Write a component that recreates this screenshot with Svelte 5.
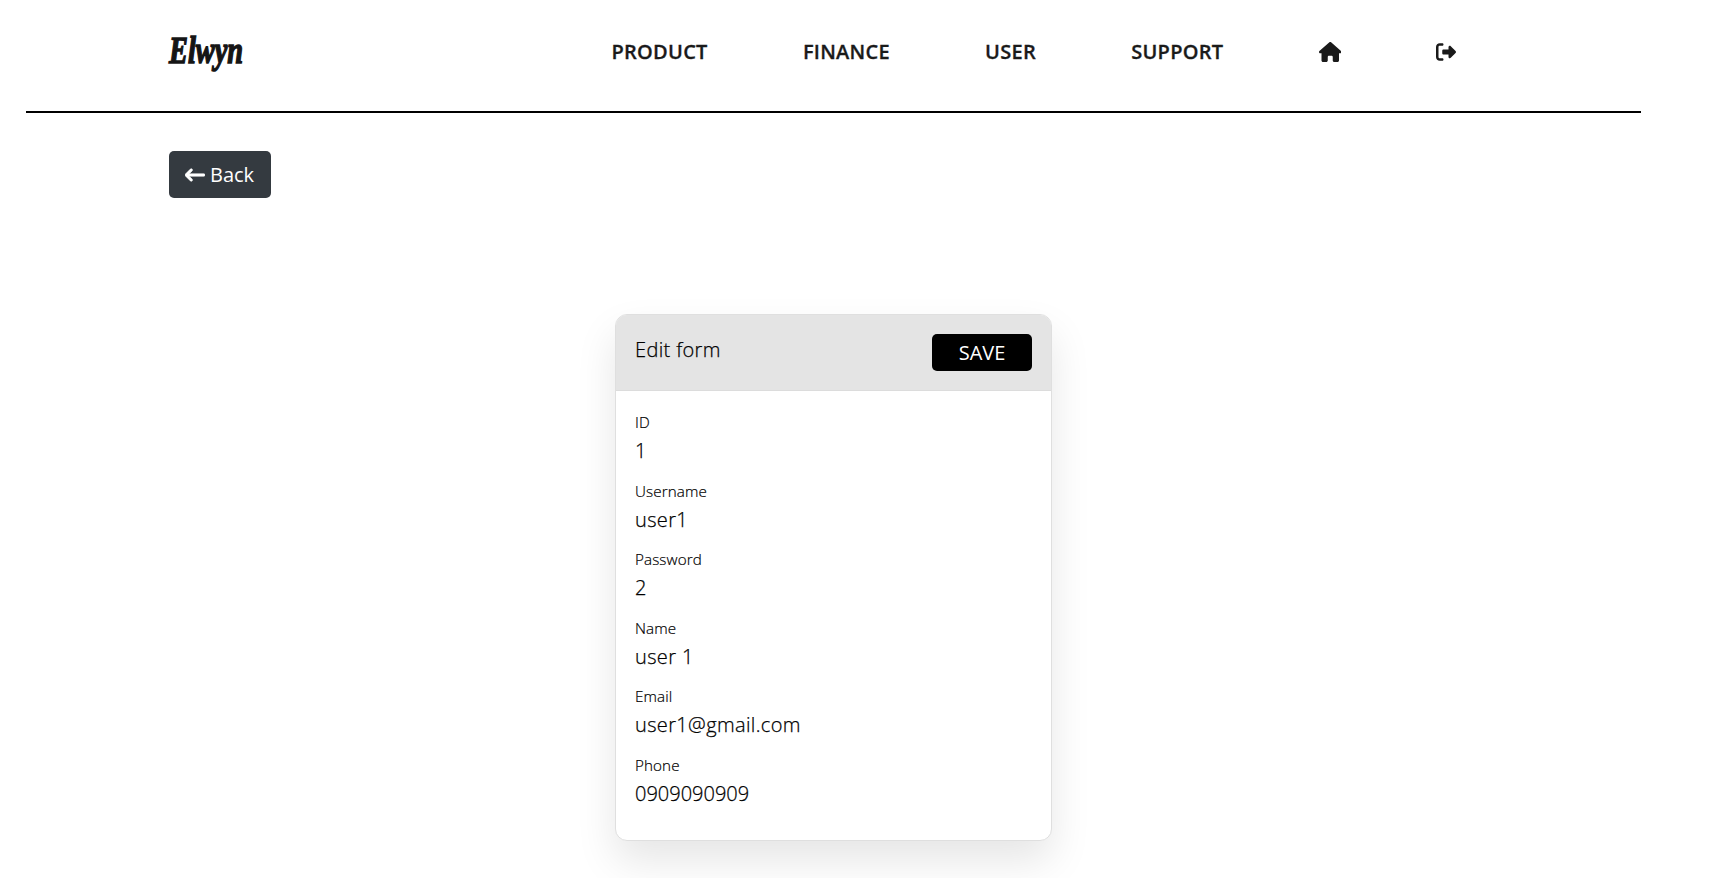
<script>
  const links = ['PRODUCT', 'FINANCE', 'USER', 'SUPPORT'];
  const fields = [
    { label: 'ID', value: '1' },
    { label: 'Username', value: 'user1' },
    { label: 'Password', value: '2' },
    { label: 'Name', value: 'user 1' },
    { label: 'Email', value: 'user1@gmail.com' },
    { label: 'Phone', value: '0909090909' }
  ];
</script>

<div class="page">
  <header>
    <div class="logo"><span>Elwyn</span></div>
    <nav>
      {#each links as link}
        <a href="#top">{link}</a>
      {/each}
      <a href="#top" aria-label="Home">
        <svg width="22.5" height="20" viewBox="0 0 576 512"><path d="M575.8 255.5c0 18-15 32.1-32 32.1h-32l.7 160.2c0 2.7-.2 5.4-.5 8.1V472c0 22.1-17.9 40-40 40H456c-1.1 0-2.2 0-3.3-.1c-1.4 .1-2.8 .1-4.2 .1H416 392c-22.1 0-40-17.9-40-40V448 384c0-17.7-14.3-32-32-32H256c-17.7 0-32 14.3-32 32v64 24c0 22.1-17.9 40-40 40H160 128.1c-1.5 0-3-.1-4.5-.2c-1.2 .1-2.4 .2-3.6 .2H104c-22.1 0-40-17.9-40-40V360c0-.9 0-1.9 .1-2.8V287.6H32c-18 0-32-14-32-32.1c0-9 3-17 10-24L266.4 8c7-7 15-8 22-8s15 2 21 7L564.8 231.5c8 7 12 15 11 24z" /></svg>
      </a>
      <a href="#top" aria-label="Log out">
        <svg width="20" height="20" viewBox="0 0 512 512"><path d="M377.9 105.9L500.7 228.7c7.2 7.2 11.3 17.1 11.3 27.3s-4.1 20.1-11.3 27.3L377.9 406.1c-6.4 6.4-15 9.9-24 9.9c-18.7 0-33.9-15.2-33.9-33.9l0-62.1-128 0c-17.7 0-32-14.3-32-32l0-64c0-17.7 14.3-32 32-32l128 0 0-62.1c0-18.7 15.2-33.9 33.9-33.9c9 0 17.6 3.6 24 9.9zM160 96L96 96c-17.7 0-32 14.3-32 32l0 256c0 17.7 14.3 32 32 32l64 0c17.7 0 32 14.3 32 32s-14.3 32-32 32l-64 0c-53 0-96-43-96-96L0 128C0 75 43 32 96 32l64 0c17.7 0 32 14.3 32 32s-14.3 32-32 32z" /></svg>
      </a>
    </nav>
  </header>

  <main>
    <button class="back">
      <svg width="20" height="20" viewBox="0 0 512 512"><path d="M9.4 233.4c-12.5 12.5-12.5 32.8 0 45.3l128 128c12.5 12.5 32.8 12.5 45.3 0s12.5-32.8 0-45.3L109.3 288 480 288c17.7 0 32-14.3 32-32s-14.3-32-32-32l-370.7 0 73.4-73.4c12.5-12.5 12.5-32.8 0-45.3s-32.8-12.5-45.3 0l-128 128z" /></svg>
      <span>Back</span>
    </button>

    <section class="card">
      <div class="head">
        <h1>Edit form</h1>
        <button class="save">SAVE</button>
      </div>
      <dl>
        {#each fields as field}
          <div class="field">
            <dt>{field.label}</dt>
            <dd class:numeric={/^\d+$/.test(field.value)}>{field.value}</dd>
          </div>
        {/each}
      </dl>
    </section>
  </main>
</div>

<style>
  :global(body) {
    background: #fff;
    overflow: hidden;
  }
  .page {
    box-sizing: border-box;
    height: 878px;
    padding: 0 73px 0 26px;
    overflow: hidden;
    display: flex;
    flex-direction: column;
    font-family: 'Open Sans', sans-serif;
    font-size: 20px;
    font-weight: 300;
    line-height: 30px;
    color: #000;
  }
  header {
    box-sizing: border-box;
    height: 113px;
    flex: none;
    display: flex;
    align-items: flex-start;
    padding: 20px 0 0 143px;
    border-bottom: 2px solid #000;
  }
  .logo {
    flex: none;
    width: 78px;
    height: 64px;
  }
  .logo span {
    display: inline-block;
    font: italic 700 38px/60px 'Liberation Serif', serif;
    color: #151515;
    -webkit-text-stroke: 1.5px #151515;
    transform: scaleX(0.745);
    transform-origin: left;
  }
  nav {
    display: flex;
    align-items: center;
    gap: 95.2px;
    height: 64px;
    margin-left: 364.5px;
  }
  nav a {
    display: flex;
    color: #1a1a1a;
    font-weight: 600;
    letter-spacing: 0.27px;
    -webkit-text-stroke: 0.3px #1a1a1a;
    text-decoration: none;
  }
  svg {
    display: block;
    fill: currentColor;
  }
  main {
    display: flex;
    flex-direction: column;
    align-items: flex-start;
    padding-top: 38px;
  }
  button {
    border: 0;
    border-radius: 5px;
    font: inherit;
    font-weight: 400;
    color: #fff;
  }
  .back {
    display: flex;
    align-items: center;
    gap: 5px;
    box-sizing: border-box;
    width: 102px;
    height: 47px;
    margin-left: 143px;
    padding: 0 16px;
    background: #343a40;
  }
  .back path {
    stroke: currentColor;
    stroke-width: 14;
  }
  .card {
    box-sizing: border-box;
    width: 437px;
    height: 527px;
    margin: 116px auto 0;
    align-self: center;
    border: 1px solid #dfdfdf;
    border-radius: 12px;
    background: #fff;
    box-shadow: 0 20px 40px rgba(0, 0, 0, 0.1);
    overflow: hidden;
  }
  .head {
    box-sizing: border-box;
    display: flex;
    justify-content: space-between;
    align-items: flex-start;
    height: 76px;
    padding: 19px;
    background: #e4e4e4;
    border-bottom: 1px solid #dcdcdc;
  }
  h1 {
    margin: 1px 0 0;
    font: inherit;
    letter-spacing: 0.36px;
    -webkit-text-stroke: 0.25px #000;
  }
  .save {
    width: 100px;
    height: 37px;
    padding: 0;
    background: #000;
  }
  dl {
    margin: 0;
    padding: 19px;
  }
  .field {
    height: 68.6px;
  }
  dt {
    font-size: 15.2px;
    line-height: 24px;
    letter-spacing: 0.12px;
    -webkit-text-stroke: 0.2px #000;
  }
  dd {
    margin: 2px 0 0;
    line-height: 30px;
    letter-spacing: 0.36px;
    -webkit-text-stroke: 0.25px #000;
  }
  .numeric {
    letter-spacing: 0;
  }
</style>
